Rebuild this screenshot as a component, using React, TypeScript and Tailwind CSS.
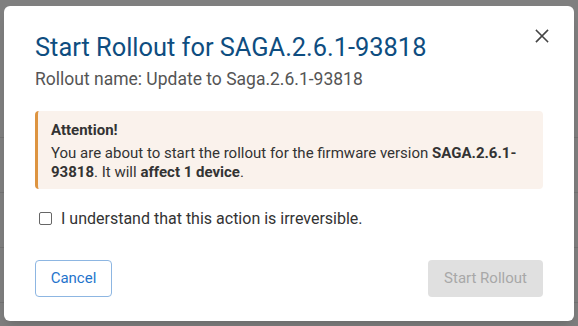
// Start rollout confirmation dialog over a dimmed device table
import * as React from 'react'

const rows = [
  { name: 'SAGA.2.6.1-93818', count: '12', date: '3 Feb 2025, 09:41', user: 'saagaanandaa@fleet.io' },
  { name: 'SAGA.2.6.0-91002', count: '04', date: '2 Feb 2025, 14:22', user: 'saagaanandaa@fleet.io' },
  { name: 'SAGA.2.5.9-88710', count: '31', date: '30 Jan 2025, 11:05', user: 'saagaanandaa@fleet.io' },
  { name: 'SAGA.2.5.8-87120', count: '07', date: '28 Jan 2025, 16:58', user: 'saagaanandaa@fleet.io' },
  { name: 'SAGA.2.6.1-192...', count: '00', date: '4 Feb 2025, 10:10', user: 'saagaanandaanangnn' },
]

function CloseIcon() {
  return (
    <svg width="14" height="14" viewBox="0 0 14 14" fill="none" stroke="currentColor" strokeWidth="1.6" strokeLinecap="square">
      <path d="M1.5 1.5 L12.5 12.5 M12.5 1.5 L1.5 12.5" />
    </svg>
  )
}

export default function App() {
  const [agreed, setAgreed] = React.useState(false)

  return (
    <div className="relative h-[326px] w-[578px] overflow-hidden bg-white font-['Roboto',sans-serif]">
      {/* Page underneath */}
      <div className="flex flex-col pt-[83px] text-[14px] text-[#333]">
        {rows.map((r) => (
          <div key={r.name} className="flex h-[55px] items-end border-b border-[#e6e6e6] pb-[7px]">
            <span className="w-[140px] pl-[10px]">{r.name}</span>
            <span className="w-[110px]">{r.count}</span>
            <span className="w-[150px]">{r.date}</span>
            <span className="flex-1 truncate">{r.user}</span>
          </div>
        ))}
      </div>

      {/* Backdrop + dialog */}
      <div className="absolute inset-0 flex items-center justify-center bg-black/50">
        <div className="flex h-[315px] w-[570px] flex-col rounded-[6px] bg-white px-[31px] pt-[25px] pb-[24px] shadow-lg">
          <div className="flex items-start justify-between">
            <h2 className="text-[25.4px] leading-[32px] font-normal text-[#0e4d80]">
              Start Rollout for SAGA.2.6.1-93818
            </h2>
            <button className="mt-[-2px] mr-[-6px] flex h-[14px] w-[14px] items-center justify-center text-[#444]">
              <CloseIcon />
            </button>
          </div>
          <p className="mt-[4px] text-[17.5px] leading-[24px] text-[#555]">
            Rollout name: Update to Saga.2.6.1-93818
          </p>

          <div className="mt-[20px] rounded-[4px] border-l-[3px] border-[#dd9440] bg-[#faf2ec] pt-[9px] pr-[16px] pb-[7px] pl-[13px] text-[15px] text-[#333]">
            <div className="leading-[20px] font-bold">Attention!</div>
            <p className="mt-[4px] leading-[19px]">
              You are about to start the rollout for the firmware version <b>SAGA.2.6.1-93818</b>. It will{' '}
              <b>affect 1 device</b>.
            </p>
          </div>

          <label className="mt-[20px] flex items-center gap-[9px] pl-[4px] text-[16px] leading-[20px] text-[#333]">
            <input
              type="checkbox"
              checked={agreed}
              onChange={(e) => setAgreed(e.target.checked)}
              className="h-[13px] w-[13px] appearance-none rounded-[2px] border border-[#666] bg-white"
            />
            I understand that this action is irreversible.
          </label>

          <div className="mt-auto flex items-center justify-between">
            <button className="h-[37px] w-[77px] rounded-[4px] border border-[#8db6e2] text-[15px] text-[#1f74cc]">
              Cancel
            </button>
            <button
              disabled={!agreed}
              className="h-[37px] w-[115px] rounded-[4px] bg-[#e0e0e0] text-[15px] text-[#a8a8a8]"
            >
              Start Rollout
            </button>
          </div>
        </div>
      </div>
    </div>
  )
}
